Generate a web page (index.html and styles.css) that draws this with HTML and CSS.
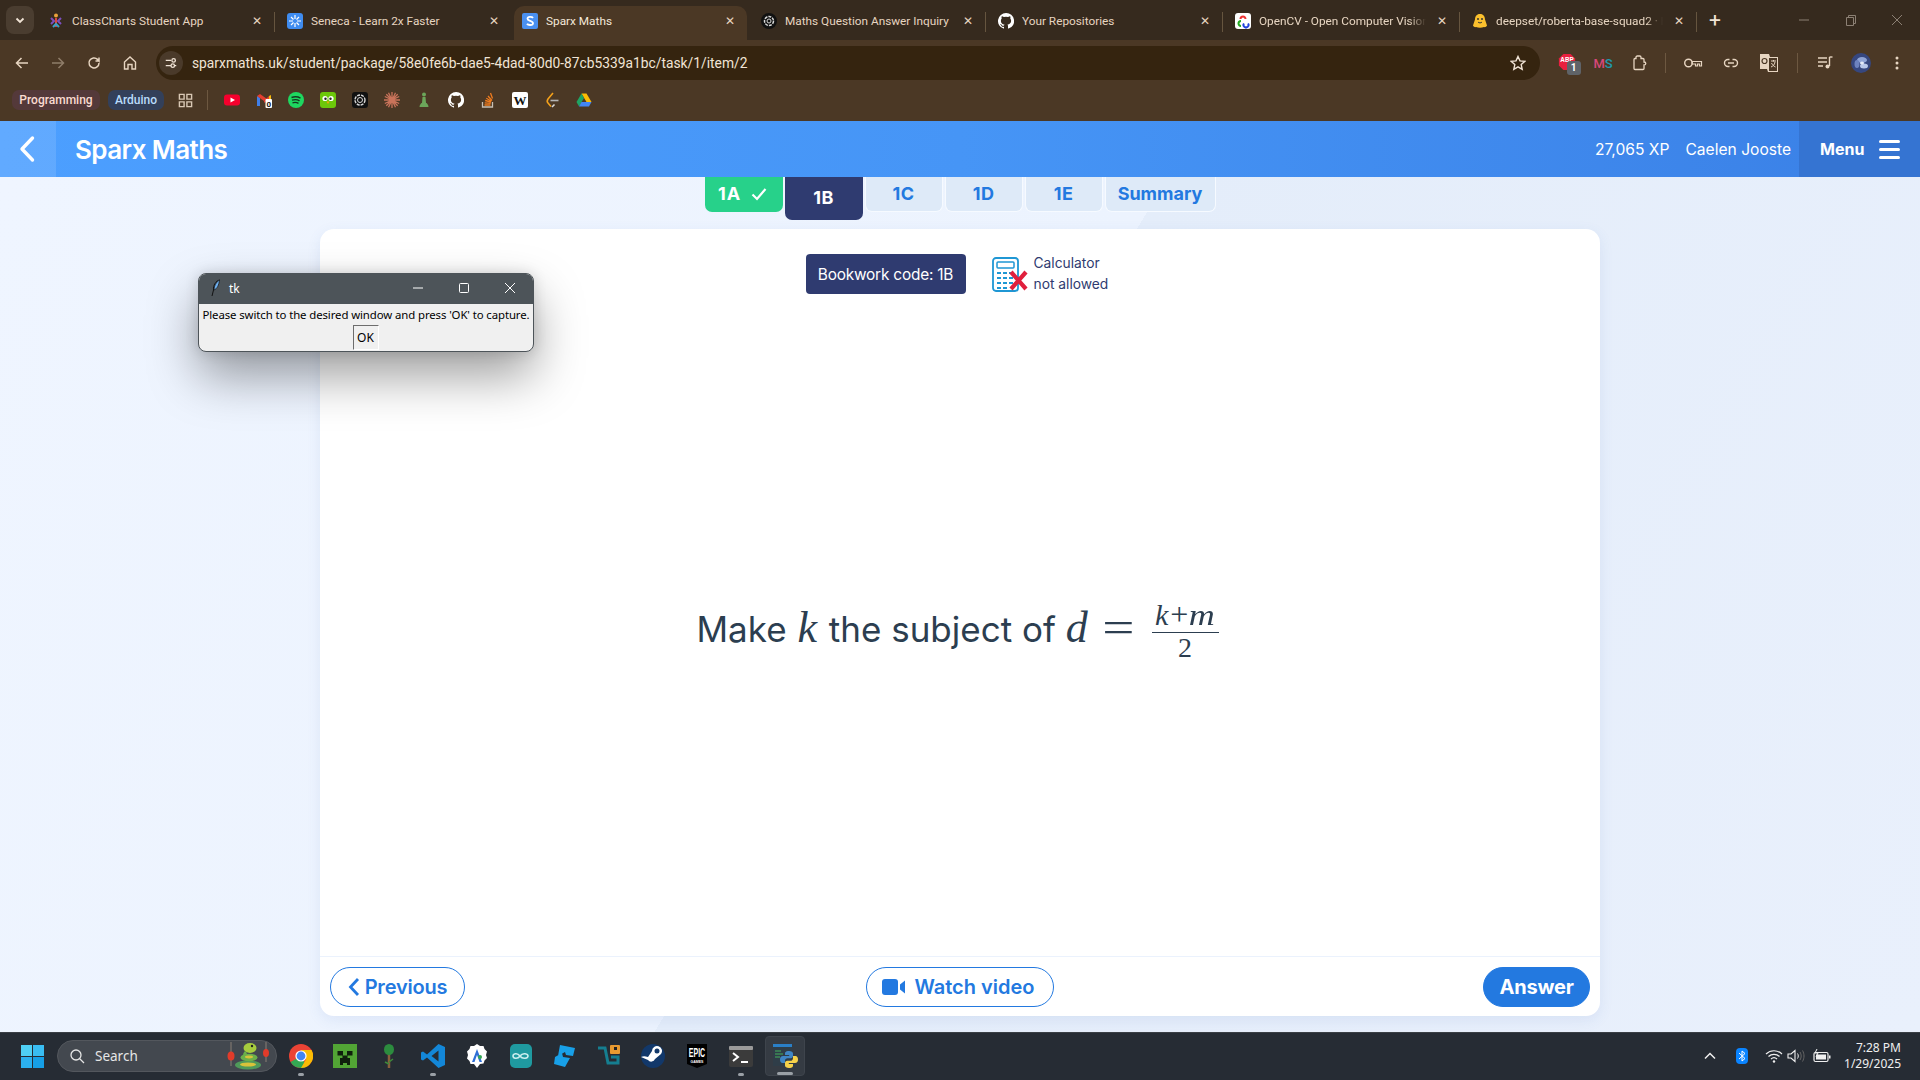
FILE: index.html
```html
<!DOCTYPE html>
<html lang="en">
<head>
<meta charset="utf-8">
<title>Sparx Maths</title>
<link rel="stylesheet" href="styles.css">
</head>
<body>
<div class="screen">

  <div class="tabstrip">
    <div class="tab-list-btn"><svg viewBox="0 0 12 12" class="i10"><path d="M2.5 4.5 6 8l3.5-3.5" fill="none" stroke="#f1e4d6" stroke-width="1.8"/></svg></div>
    <div class="tab first sep">
      <svg class="fav" viewBox="0 0 16 16"><circle cx="8" cy="2.5" r="2" fill="#e9a23b"/><path d="M3 5l3 3-3 3M13 5l-3 3 3 3" stroke="#7b4fc0" stroke-width="2" fill="none"/><path d="M8 5v9" stroke="#d8453f" stroke-width="2"/><path d="M5 14l3-3 3 3" stroke="#3aa0c8" stroke-width="2" fill="none"/></svg>
      <span class="tab-title">ClassCharts Student App</span><span class="tab-x">✕</span>
    </div>
    <div class="tab">
      <svg class="fav" viewBox="0 0 16 16"><rect width="16" height="16" rx="3" fill="#3f8cf0"/><path d="M8 2v4M8 10v4M2 8h4M10 8h4M4 4l2.5 2.5M12 4 9.5 6.5M4 12l2.5-2.5M12 12 9.5 9.5" stroke="#fff" stroke-width="1.2"/></svg>
      <span class="tab-title">Seneca - Learn 2x Faster</span><span class="tab-x">✕</span>
    </div>
    <div class="tab active">
      <svg class="fav" viewBox="0 0 16 16"><rect width="16" height="16" rx="2" fill="#4a90f0"/><path d="M11 5c-1-1.5-5.5-1.5-5.5.8C5.5 8.2 11 7.5 11 10.2c0 2.3-5 2.3-6 .5" fill="none" stroke="#fff" stroke-width="1.8"/></svg>
      <span class="tab-title">Sparx Maths</span><span class="tab-x">✕</span>
    </div>
    <div class="tab sep">
      <svg class="fav" viewBox="0 0 16 16"><circle cx="8" cy="8" r="8" fill="#111"/><circle cx="8" cy="8" r="4.5" fill="none" stroke="#d8d8d8" stroke-width="1.5" stroke-dasharray="3 1"/><circle cx="8" cy="8" r="2" fill="none" stroke="#d8d8d8"/></svg>
      <span class="tab-title">Maths Question Answer Inquiry</span><span class="tab-x">✕</span>
    </div>
    <div class="tab sep">
      <svg class="fav" viewBox="0 0 16 16"><path fill="#fff" d="M8 0a8 8 0 0 0-2.5 15.6c.4.1.5-.2.5-.4v-1.4c-2.2.5-2.7-1-2.7-1-.4-.9-.9-1.200-.9-1.200-.7-.5.1-.5.1-.5.8.1 1.200.8 1.200.8.7 1.200 1.900.9 2.300.7.1-.5.3-.9.5-1.100-1.800-.2-3.600-.9-3.600-4 0-.9.3-1.600.8-2.100-.1-.2-.4-1 .1-2.100 0 0 .7-.2 2.200.8a7.500 7.500 0 0 1 4 0c1.500-1 2.200-.8 2.200-.8.4 1.100.2 1.900.1 2.100.5.6.8 1.300.8 2.100 0 3.100-1.900 3.800-3.700 4 .3.3.6.8.6 1.500v2.200c0 .2.1.5.6.4A8 8 0 0 0 8 0z"/></svg>
      <span class="tab-title">Your Repositories</span><span class="tab-x">✕</span>
    </div>
    <div class="tab sep">
      <svg class="fav" viewBox="0 0 16 16"><rect width="16" height="16" rx="3" fill="#fff"/><path d="M5.5 6a2.5 2.5 0 1 1 5 0" fill="none" stroke="#e33" stroke-width="2"/><path d="M6 8a2.5 2.5 0 1 0 0 5" fill="none" stroke="#2a2" stroke-width="2"/><path d="M13 10.500a2.5 2.5 0 1 1-4 0" fill="none" stroke="#24d" stroke-width="2"/></svg>
      <span class="tab-title clip">OpenCV - Open Computer Vision</span><span class="tab-x">✕</span>
    </div>
    <div class="tab sep">
      <svg class="fav" viewBox="0 0 16 16"><path d="M8 1c3.5 0 5 2.5 5 5.5l2 6c0 1-2 2-3 1.5-2.5 1-5.5 1-8 0-1 .5-3-.5-3-1.500l2-6C3 3.5 4.5 1 8 1z" fill="#fbc02d"/><circle cx="6" cy="6" r="1" fill="#333"/><circle cx="10" cy="6" r="1" fill="#333"/><path d="M6 9c1 1.2 3 1.2 4 0" stroke="#333" fill="none"/></svg>
      <span class="tab-title clip">deepset/roberta-base-squad2 · Hugging Face</span><span class="tab-x">✕</span>
    </div>
    <span class="new-tab">+</span>
    <div class="window-controls">
      <svg class="i12" viewBox="0 0 12 12"><path d="M1 6h10" stroke="#8c8074"/></svg>
      <svg class="i12" viewBox="0 0 12 12"><path d="M1.5 3.5h7v8h-7zM3.5 3.5v-2h7v8h-2" fill="none" stroke="#8c8074"/></svg>
      <svg class="i12" viewBox="0 0 12 12"><path d="M1 1l10 10M11 1 1 11" stroke="#8c8074"/></svg>
    </div>
  </div>

  <div class="toolbar">
    <svg class="tb-ic nav" viewBox="0 0 16 16"><path d="M14 8H3M7.5 3 2.5 8l5 5" fill="none" stroke="#e7d5c1" stroke-width="1.5"/></svg>
    <svg class="tb-ic nav" viewBox="0 0 16 16"><path d="M2 8h11M8.5 3l5 5-5 5" fill="none" stroke="#8f7d69" stroke-width="1.5"/></svg>
    <svg class="tb-ic nav" viewBox="0 0 16 16"><path d="M13 8a5 5 0 1 1-1.5-3.6L13 6V2.5M13 6H9.5" fill="none" stroke="#e7d5c1" stroke-width="1.5"/></svg>
    <svg class="tb-ic nav" viewBox="0 0 16 16"><path d="M2.5 14V7L8 2l5.5 5v7H10V9.500H6V14z" fill="none" stroke="#e7d5c1" stroke-width="1.4"/></svg>
    <div class="omnibox">
      <div class="site-info"><svg class="i14" viewBox="0 0 16 16"><path d="M2 5h6M12 11h2M2 11h6" stroke="#f1e4d6" stroke-width="1.5"/><circle cx="11" cy="5" r="2" fill="none" stroke="#f1e4d6" stroke-width="1.5"/><circle cx="10" cy="11" r="2" fill="none" stroke="#f1e4d6" stroke-width="1.5"/></svg></div>
      <span class="url">sparxmaths.uk/student/package/58e0fe6b-dae5-4dad-80d0-87cb5339a1bc/task/1/item/2</span>
      <svg class="star" viewBox="0 0 16 16"><path d="M8 1.5l2 4.4 4.7.5-3.500 3.200 1 4.700L8 11.900l-4.200 2.400 1-4.700L1.300 6.400 6 5.900z" fill="none" stroke="#f1e4d6" stroke-width="1.4"/></svg>
    </div>
    <div class="ext-row">
      <div class="ext"><div class="abp"><svg class="abp-ic" viewBox="0 0 20 20"><path d="M6 1h8l5 5v8l-5 5H6l-5-5V6z" fill="#e8203f"/><text x="10" y="10" class="abp-text">ABP</text></svg><span class="abp-badge">1</span></div></div>
      <div class="ext"><span class="ms"><span class="ms-m">M</span><span class="ms-s">S</span></span></div>
      <div class="ext"><svg class="tb-ic" viewBox="0 0 16 16"><path d="M5 3.5V2.300c0-.8.5-1.300 1.300-1.300h2.400c.8 0 1.300.5 1.300 1.300v1.200h2c.6 0 1 .4 1 1V7c1.400 0 1.800.6 1.800 1.500S14.400 10 13 10v3.500c0 .6-.4 1-1 1H4c-.6 0-1-.4-1-1v-9c0-.6.4-1 1-1z" fill="none" stroke="#e7d5c1" stroke-width="1.3"/></svg></div>
      <span class="tb-sep first-sep"></span>
      <div class="ext tool"><svg class="tb-key" viewBox="0 0 20 16"><circle cx="5.5" cy="8" r="3.8" fill="none" stroke="#e7d5c1" stroke-width="1.4"/><path d="M9 6.500h9.500v4.500h-2V9h-2v2h-2V9H9z" fill="none" stroke="#e7d5c1" stroke-width="1.2"/></svg></div>
      <div class="ext tool"><svg class="tb-ic" viewBox="0 0 16 16"><path d="M6.5 4.5H5a3.5 3.5 0 0 0 0 7h1.500M9.500 4.500H11a3.5 3.5 0 0 1 0 7H9.500M5 8h6" fill="none" stroke="#e7d5c1" stroke-width="1.4"/></svg></div>
      <div class="ext tool"><svg class="tb-big" viewBox="0 0 20 20"><path d="M1 1h9l1 3h8v15H9l-1-3H1z" fill="#e7d5c1"/><path d="M10 5h8v13h-8z" fill="#4b3825"/><circle cx="5.5" cy="8" r="2.5" fill="none" stroke="#4b3825" stroke-width="1.2"/><path d="M12 8h5M14.500 7v1.500M16 9c-.5 3-2 4-4 5M12.500 10c1 2 2 3 4 4" stroke="#e7d5c1" fill="none"/></svg></div>
      <span class="tb-sep second-sep"></span>
      <div class="ext"><svg class="tb-ic" viewBox="0 0 16 16"><path d="M1 3h9M1 7h9M1 11h5" stroke="#e7d5c1" stroke-width="1.4"/><path d="M12.500 2v9" stroke="#e7d5c1" stroke-width="1.4"/><path d="M12.500 2h3" stroke="#e7d5c1" stroke-width="1.4"/><circle cx="10.500" cy="11.500" r="2" fill="#e7d5c1"/></svg></div>
      <div class="ext"><svg class="avatar" viewBox="0 0 20 20"><circle cx="10" cy="10" r="10" fill="#36477f"/><ellipse cx="11" cy="7" rx="5" ry="3" fill="#8fa4d6"/><ellipse cx="13" cy="13" rx="4" ry="2.500" fill="#b9c8ea"/><ellipse cx="6" cy="11" rx="2.500" ry="4" fill="#6d83bf"/><ellipse cx="11" cy="10" rx="2" ry="1.500" fill="#e4ebf8"/></svg></div>
      <div class="ext"><svg class="tb-ic" viewBox="0 0 16 16"><circle cx="8" cy="3" r="1.5" fill="#e7d5c1"/><circle cx="8" cy="8" r="1.5" fill="#e7d5c1"/><circle cx="8" cy="13" r="1.5" fill="#e7d5c1"/></svg></div>
    </div>
  </div>

  <div class="bookmarks">
    <span class="pill pill-red">Programming</span>
    <span class="pill pill-blue">Arduino</span>
    <svg class="bm grid-ic" viewBox="0 0 16 16"><path d="M1.5 1.5h5v5h-5zM9.500 1.500h5v5h-5zM1.500 9.500h5v5h-5zM9.500 9.500h5v5h-5z" fill="none" stroke="#d9c8b4" stroke-width="1.5"/></svg>
    <span class="bm-sep"></span>
    <div class="bm-icons">
      <svg class="bm" viewBox="0 0 16 16"><rect y="2.5" width="16" height="11" rx="3" fill="#f5002d"/><path d="M6.5 5.5 11 8l-4.500 2.500z" fill="#fff"/></svg>
      <svg class="bm" viewBox="0 0 16 16"><path d="M1 14V4l3 2v8z" fill="#3f7ee8"/><path d="M1 4l7 5 3-2-7-5z" fill="#e33e30"/><path d="M8 9l5-5 2 1-7 6z" fill="#e33e30"/><path d="M13 4l2-1v4l-2 1z" fill="#f6b90a"/><rect x="9.5" y="7" width="6.5" height="9" rx="1" fill="#fff"/><text x="12.700" y="14.800" class="gm-text">0</text></svg>
      <svg class="bm" viewBox="0 0 16 16"><circle cx="8" cy="8" r="8" fill="#1ed760"/><path d="M3.5 5.5c3-1 6.500-.8 9 .7M4 8.200c2.500-.8 5.500-.6 7.500.7M4.500 10.800c2-.6 4.500-.4 6 .6" stroke="#14361f" stroke-width="1.4" fill="none"/></svg>
      <svg class="bm" viewBox="0 0 16 16"><rect width="16" height="16" rx="3" fill="#6cc70a"/><circle cx="5" cy="6.5" r="2.6" fill="#fff"/><circle cx="11" cy="6.5" r="2.6" fill="#fff"/><circle cx="5.5" cy="6.8" r="1.2" fill="#222"/><circle cx="10.5" cy="6.8" r="1.2" fill="#222"/><path d="M6.5 9.5h3L8 12z" fill="#f6a60a"/></svg>
      <svg class="bm" viewBox="0 0 16 16"><rect width="16" height="16" rx="3" fill="#111"/><circle cx="8" cy="8" r="5" fill="none" stroke="#d8d8d8" stroke-width="1.4" stroke-dasharray="3 1"/><circle cx="8" cy="8" r="2.5" fill="none" stroke="#d8d8d8"/></svg>
      <svg class="bm" viewBox="0 0 16 16"><path d="M8 0v16M0 8h16M2.300 2.300l11.400 11.400M13.700 2.300 2.300 13.700M4.500 .8l7 14.400M11.500 .8l-7 14.400M.8 4.500l14.400 7M15.200 4.500.8 11.500" stroke="#c9735a" stroke-width="1.3"/></svg>
      <svg class="bm" viewBox="0 0 16 16"><circle cx="8" cy="2.5" r="2" fill="#6ca65a"/><path d="M6.5 5h3l.5 6h-4z" fill="#6ca65a"/><path d="M3.500 15c0-2 1.500-3.500 2-4h5c.5.5 2 2 2 4z" fill="#6ca65a"/></svg>
      <svg class="bm" viewBox="0 0 16 16"><path fill="#fff" d="M8 0a8 8 0 0 0-2.5 15.6c.4.1.5-.2.5-.4v-1.4c-2.2.5-2.7-1-2.7-1-.4-.9-.9-1.200-.9-1.200-.7-.5.1-.5.1-.5.8.1 1.200.8 1.200.8.7 1.200 1.900.9 2.300.7.1-.5.3-.9.5-1.100-1.800-.2-3.600-.9-3.600-4 0-.9.3-1.600.8-2.100-.1-.2-.4-1 .1-2.100 0 0 .7-.2 2.200.8a7.500 7.500 0 0 1 4 0c1.500-1 2.200-.8 2.200-.8.4 1.100.2 1.900.1 2.100.5.6.8 1.300.8 2.100 0 3.100-1.900 3.800-3.700 4 .3.3.6.8.6 1.500v2.200c0 .2.1.5.6.4A8 8 0 0 0 8 0z"/></svg>
      <svg class="bm" viewBox="0 0 16 16"><path d="M2.500 10v5h10v-5" fill="none" stroke="#c9c0b4" stroke-width="1.3"/><path d="M4.500 13h6M4.700 10.800l6 .6M5.200 8.500l5.800 1.500M6.300 6.300l5.200 3M8 4l4 4.500M10.500 1l2 5.500" stroke="#ef7b1e" stroke-width="1.3"/></svg>
      <svg class="bm" viewBox="0 0 16 16"><rect width="16" height="16" rx="2" fill="#fff"/><text x="8" y="12.500" class="wiki-text">W</text></svg>
      <svg class="bm" viewBox="0 0 16 16"><path d="M9 1 4 7c-1 1.500-1 3 0 4l3 3.500" fill="none" stroke="#f4a11b" stroke-width="1.6"/><path d="M10.500 12.500 8 15" stroke="#d8d8d8" stroke-width="1.6"/><path d="M6.500 8.500h8" stroke="#b5b5b5" stroke-width="1.6"/></svg>
      <svg class="bm" viewBox="0 0 16 16"><path d="M5.500 1.500h5L15.500 10H10.500z" fill="#fbbc04"/><path d="M5.500 1.500 .5 10 3 14.500 8 6z" fill="#1fa463"/><path d="M3 14.500h10l2.500-4.500H5.500z" fill="#4285f4"/></svg>
    </div>
  </div>

  <header class="app-header">
    <div class="back"><svg class="back-ic" viewBox="0 0 18 28"><path d="M14.500 3 4 14l10.500 11" fill="none" stroke="#fff" stroke-width="3.4" stroke-linecap="round" stroke-linejoin="round"/></svg></div>
    <h1 class="brand">Sparx Maths</h1>
    <span class="xp">27,065 XP</span>
    <span class="user">Caelen Jooste</span>
    <div class="menu"><span class="menu-label">Menu</span><span class="burger"><i></i><i></i><i></i></span></div>
  </header>

  <main class="stage">
    <nav class="task-tabs">
      <span class="ttab done">1A <svg class="check" viewBox="0 0 16 14"><path d="M1.500 7.500 6 12l8.500-10" fill="none" stroke="#fff" stroke-width="2.2"/></svg></span>
      <span class="ttab current">1B</span>
      <span class="ttab">1C</span>
      <span class="ttab">1D</span>
      <span class="ttab">1E</span>
      <span class="ttab summary">Summary</span>
    </nav>
    <section class="card">
      <div class="card-top">
        <span class="code">Bookwork code: 1B</span>
        <div class="calc">
          <svg class="calc-ic" viewBox="0 0 36 35"><rect x="1" y="1" width="25" height="33" rx="3" fill="#fff" stroke="#1f97d4" stroke-width="1.8"/><rect x="5" y="5" width="17" height="6" rx="1" fill="none" stroke="#1f97d4" stroke-width="1.5"/><path d="M5 16h16M5 21h16M5 26h16M5 31h12" stroke="#1f97d4" stroke-width="2" stroke-dasharray="4 2"/><path d="M19 15l15 17M34 15 19 32" stroke="#e01f3d" stroke-width="4.2"/></svg>
          <span class="calc-text">Calculator<br>not allowed</span>
        </div>
      </div>
      <div class="question">
        <p class="q-line">Make <i class="v vk">k</i> the subject of <i class="v">d</i><span class="eq">=</span><span class="frac"><span class="num"><i>k</i><span class="plus">+</span><i class="m">m</i></span><span class="den">2</span></span></p>
      </div>
      <footer class="card-foot">
        <span class="btn prev"><svg class="chev" viewBox="0 0 12 20"><path d="M10 2 2.500 10l7.500 8" fill="none" stroke="#2379e0" stroke-width="2.8"/></svg>Previous</span>
        <span class="btn watch"><svg class="cam" viewBox="0 0 24 18"><rect y="1" width="16" height="16" rx="3" fill="#2379e0"/><path d="M18 6.500 23 2.500v13l-5-4z" fill="#2379e0"/></svg>Watch video</span>
        <span class="btn primary">Answer</span>
      </footer>
    </section>
    <div class="tk">
      <div class="tk-title">
        <svg class="tk-feather" viewBox="0 0 10 18"><path d="M8.500 1C5 2 2 6 2.500 11l-1.500 6" fill="none" stroke="#111" stroke-width="1"/><path d="M8.500 1C5 3 3 7 3 11c3-1 5-5 5.500-10z" fill="#6fb0ef" stroke="#111" stroke-width=".7"/></svg>
        <span class="tk-name">tk</span>
        <svg class="tk-b" viewBox="0 0 12 12"><path d="M1 6h10" stroke="#fff"/></svg>
        <svg class="tk-b" viewBox="0 0 12 12"><rect x="1.5" y="1.5" width="9" height="9" rx="1" fill="none" stroke="#fff"/></svg>
        <svg class="tk-b" viewBox="0 0 12 12"><path d="M1 1l10 10M11 1 1 11" stroke="#fff"/></svg>
      </div>
      <div class="tk-body">
        <p class="tk-msg">Please switch to the desired window and press 'OK' to capture.</p>
        <span class="tk-ok">OK</span>
      </div>
    </div>
  </main>

  <div class="taskbar">
    <svg class="win" viewBox="0 0 24 24"><path d="M0 0h11.500v11.500H0z" fill="#4fd0f5"/><path d="M12.500 0H24v11.500H12.500z" fill="#39bdf2"/><path d="M0 12.500h11.500V24H0z" fill="#2bb0ee"/><path d="M12.500 12.500H24V24H12.500z" fill="#169fe6"/></svg>
    <div class="search">
      <svg class="i16" viewBox="0 0 16 16"><circle cx="7" cy="7" r="5" fill="none" stroke="#e6e6e6" stroke-width="1.3"/><path d="M10.500 10.500 15 15" stroke="#e6e6e6" stroke-width="1.3"/></svg>
      <span class="search-label">Search</span>
      <svg class="snake" viewBox="0 0 44 30"><path d="M5 1v24M40 1v20" stroke="#a98" stroke-width=".7"/><ellipse cx="5" cy="15" rx="3.500" ry="4.500" fill="#e23b2a"/><ellipse cx="40" cy="12" rx="3" ry="4" fill="#e23b2a"/><ellipse cx="22" cy="24" rx="13" ry="4.500" fill="#4f9a5a"/><ellipse cx="22" cy="23.500" rx="8" ry="2" fill="#d9c23a"/><ellipse cx="23" cy="16.500" rx="8.500" ry="3.800" fill="#6bb04a"/><ellipse cx="23" cy="16" rx="4" ry="1.400" fill="#d9c23a"/><ellipse cx="24" cy="7" rx="6.500" ry="5" fill="#a6cc3e"/><circle cx="26" cy="5" r="1.200" fill="#222"/><path d="M20 11c-1 1-2 2-1 4" stroke="#6bb04a" stroke-width="3" fill="none"/></svg>
    </div>
    <div class="apps">
      <div class="app open"><svg class="app-ic" viewBox="0 0 24 24"><circle cx="12" cy="12" r="12" fill="#ea4335"/><path d="M12 12 1.600 18A12 12 0 0 0 12 24c2 0 4-.5 5.800-1.500z" fill="#34a853"/><path d="M12 6h10.500A12 12 0 0 1 12 24l5.200-9z" fill="#fbbc04"/><circle cx="12" cy="12" r="5.600" fill="#fff"/><circle cx="12" cy="12" r="4.400" fill="#4285f4"/></svg></div>
      <div class="app"><svg class="app-ic" viewBox="0 0 24 24"><rect width="24" height="24" fill="#52a535"/><path d="M4.500 7h5.500v4.500H4.500zM14 7h5.500v4.500H14zM9.500 11.500h5V14H17v7h-3v-2h-4v2H7v-7h2.500z" fill="#10200d"/></svg></div>
      <div class="app"><svg class="app-ic" viewBox="0 0 24 24"><path d="M12 10v14" stroke="#8a5f3c" stroke-width="2.5"/><path d="M12 18l4-3M12 20l-4-2" stroke="#3d8a3a" stroke-width="1.5"/><ellipse cx="12" cy="5.500" rx="5" ry="5.500" fill="#2c8c3e"/></svg></div>
      <div class="app open"><svg class="app-ic" viewBox="0 0 24 24"><path d="M17.500 0 24 3v18l-6.500 3L6 13.500 2 16.500 0 15.500v-7L2 7.500 6 10.500zM17.500 6.500 10.500 12l7 5.500z" fill="#1387d8"/></svg></div>
      <div class="app"><svg class="app-ic" viewBox="0 0 24 24"><path d="M12 0l3 2 3.500 0 1 3 2.500 2.500-1 3.500 1 3-2.500 2.500-1 3L15 20l-3 4-3-4-3.500 0-1-3L2 14.500 3 11 2 7.500 4.500 5l1-3L9 2z" fill="#fff"/><path d="M12 5 7 18h2.500l2.500-7 2.500 7H17z" fill="#2f6fd6"/><circle cx="15" cy="13" r="2" fill="#34a853"/></svg></div>
      <div class="app"><svg class="app-ic" viewBox="0 0 24 24"><rect x="1" width="22" height="24" rx="5" fill="#1f9aa0"/><path d="M11 12c-3-4-7-2-7 0s4 4 7 0c3-4 8-2 8 0s-5 4-8 0z" fill="none" stroke="#c9eeee" stroke-width="1.6"/></svg></div>
      <div class="app"><svg class="app-ic" viewBox="0 0 24 24"><path d="M7 1l15 3-2 8-7-1-1-3-7 4zM2 13l7-4 1 4 7 1-5 9-11-3z" fill="#18a0e8"/></svg></div>
      <div class="app"><svg class="app-ic" viewBox="0 0 24 24"><path d="M1 4h7l3 15h10v-6H14" fill="none" stroke="#157e90" stroke-width="3"/><rect x="13" y="1" width="10" height="9" rx="1" fill="#e89a30"/><rect x="17" y="3" width="3" height="3" fill="#222"/></svg></div>
      <div class="app"><svg class="app-ic" viewBox="0 0 24 24"><circle cx="12" cy="12" r="12" fill="#12386a"/><path d="M0 13l7 3a4 4 0 0 0 7-1l6-5a5 5 0 1 0-9-3l-4 6C4 12 2 12 0 13z" fill="#fff"/><circle cx="16" cy="7" r="2.5" fill="#12386a"/></svg></div>
      <div class="app"><svg class="app-ic" viewBox="0 0 24 24"><path d="M2 0h20v20l-10 4-10-4z" fill="#000"/><text x="12" y="7" class="epic-text" transform="scale(1 1.900)">EPIC</text><text x="12" y="18.500" class="games-text">GAMES</text></svg></div>
      <div class="app open"><svg class="app-ic" viewBox="0 0 24 24"><rect y="2" width="24" height="21" rx="2" fill="#3b3b3b"/><rect y="2" width="24" height="4" rx="1" fill="#9a9a9a"/><path d="M4 9l5 4-5 4" fill="none" stroke="#fff" stroke-width="2"/><path d="M12 18h7" stroke="#fff" stroke-width="2"/></svg></div>
      <div class="app running"><svg class="app-ic py" viewBox="0 0 24 24"><rect width="19" height="22" fill="#2f3d48"/><rect width="19" height="3" fill="#2a7fc7"/><path d="M2 7h6M2 10h8M2 13h5" stroke="#3e8a55" stroke-width="1.4"/><path d="M16 7c-3.500 0-4 1.500-4 2.500V11h4.200v1H10c-2 0-3 1.500-3 3.500s1 3.500 2.500 3.500H12v-2.200c0-1.500 1-2.600 2.600-2.600h3.200c1.200 0 2.200-1 2.200-2.200V9.500C20 8 18.500 7 16 7z" fill="#3f86c6"/><path d="M16 24c3.500 0 4-1.500 4-2.500V20h-4.200v-1H22c2 0 3-1.500 3-3.500S24 12 22.500 12H20v2.200c0 1.500-1 2.600-2.600 2.600h-3.200c-1.200 0-2.200 1-2.200 2.200v2.500c0 1.500 1.500 2.500 4 2.500z" fill="#f7d24a"/></svg></div>
    </div>
    <div class="tray">
      <svg class="i14 t-chev" viewBox="0 0 14 14"><path d="M2 9.500 7 4.500l5 5" fill="none" stroke="#f0f0f0" stroke-width="1.5"/></svg>
      <svg class="t-bt" viewBox="0 0 12 16"><rect width="12" height="16" rx="4" fill="#0a84ff"/><path d="M3 5l6 5.500L6 13V3l3 2.500L3 11" fill="none" stroke="#fff"/></svg>
      <svg class="t-wifi" viewBox="0 0 18 14"><path d="M1 5a11.500 11.500 0 0 1 16 0M3.500 7.500a8 8 0 0 1 11 0M6 10a4.500 4.500 0 0 1 6 0" fill="none" stroke="#f0f0f0" stroke-width="1.2"/><circle cx="9" cy="12.500" r="1.200" fill="#f0f0f0"/></svg>
      <svg class="t-vol" viewBox="0 0 18 14"><path d="M1 5h3l4-3.500v11L4 9H1z" fill="none" stroke="#f0f0f0" stroke-width="1.1"/><path d="M10.500 4.500c1 1.500 1 3.500 0 5" fill="none" stroke="#f0f0f0"/><path d="M13 3c1.600 2.500 1.600 5.500 0 8M15.500 1.500c2 3.500 2 7.500 0 11" fill="none" stroke="#666"/></svg>
      <svg class="t-bat" viewBox="0 0 18 14"><rect x="1" y="3.500" width="14" height="9" rx="1.500" fill="none" stroke="#f0f0f0" stroke-width="1.2"/><rect x="3" y="5.500" width="10" height="5" fill="#f0f0f0"/><rect x="16" y="6.500" width="1.500" height="3" fill="#f0f0f0"/><path d="M4 0 2 4h3L3 8" fill="none" stroke="#f0f0f0"/></svg>
      <div class="clock"><span>7:28 PM</span><span>1/29/2025</span></div>
    </div>
  </div>

</div>
</body>
</html>
```

FILE: styles.css
```css
* { box-sizing: border-box; }
html, body { margin: 0; padding: 0; }
body { width: 1920px; height: 1080px; overflow: hidden; font-family: "Inter", "Noto Sans", sans-serif; }
p, h1 { margin: 0; }
svg { display: block; flex: none; }

.screen { width: 1920px; height: 1080px; display: flex; flex-direction: column; position: relative; overflow: hidden; }

.i10 { width: 12px; height: 12px; }
.i12 { width: 12px; height: 12px; }
.i14 { width: 14px; height: 14px; }
.i16 { width: 16px; height: 16px; }

/* Browser tab strip */
.tabstrip { height: 40px; background: #362a1e; display: flex; align-items: flex-end; flex: none; padding-left: 6px; font-family: "Roboto", sans-serif; }
.tab-list-btn { width: 28px; height: 28px; margin: 0 4px 6px 0; border-radius: 8px; background: #4a3d30; display: flex; align-items: center; justify-content: center; }
.tab { width: 237px; height: 34px; display: flex; align-items: center; padding: 0 12px 5px 12px; color: #e7d5c1; font-size: 11.8px; position: relative; }
.tab.first { padding-left: 10px; }
.tab.sep::after { content: ""; position: absolute; right: 0; top: 6px; width: 1px; height: 20px; background: #66553f; }
.tab.active { background: #4b3825; border-radius: 10px 10px 0 0; margin: 0 2px; width: 233px; padding-left: 8px; padding-right: 11px; color: #f5e8da; }
.fav { width: 16px; height: 16px; margin-right: 8px; }
.tab-title { flex: 1; min-width: 0; white-space: nowrap; overflow: hidden; }
.tab-title.clip { margin-right: 10px; -webkit-mask-image: linear-gradient(90deg, #000 90%, transparent); mask-image: linear-gradient(90deg, #000 90%, transparent); }
.tab-x { width: 12px; font-size: 12px; line-height: 12px; text-align: center; color: #e7d5c1; flex: none; }
.new-tab { width: 36px; text-align: center; color: #f1e4d6; font-size: 21px; line-height: 28px; height: 34px; }
.window-controls { margin-left: auto; height: 40px; width: 140px; display: flex; align-items: center; justify-content: space-between; padding: 0 17px 0 18px; }

/* Browser toolbar */
.toolbar { height: 40px; background: #4b3825; flex: none; display: flex; align-items: center; padding: 6px 4px 0 14px; }
.tb-ic { width: 16px; height: 16px; }
.tb-ic.nav { margin-right: 20px; }
.tb-key { width: 20px; height: 16px; }
.tb-big { width: 20px; height: 20px; }
.omnibox { width: 1384px; height: 34px; margin: 0 0 0 -2px; background: #35240f; border-radius: 17px; display: flex; align-items: center; padding: 0 14px 0 3px; }
.site-info { width: 24px; height: 24px; border-radius: 50%; background: #4a3a2a; display: flex; align-items: center; justify-content: center; margin-right: 9px; }
.url { font-family: "Roboto", sans-serif; font-size: 13.8px; color: #f1e4d6; flex: 1; white-space: nowrap; }
.star { width: 16px; height: 16px; }
.ext-row { flex: 1; display: flex; align-items: center; padding-left: 9px; }
.ext { width: 36px; display: flex; align-items: center; justify-content: center; }
.ext.tool { width: 38px; }
.abp { position: relative; width: 18px; height: 18px; margin: -2px 0 0 -1px; }
.abp-ic { width: 18px; height: 18px; }
.abp-text { font: 700 7px "Liberation Sans", sans-serif; fill: #fff; text-anchor: middle; }
.abp-badge { position: absolute; left: 9px; top: 8px; width: 14px; height: 14px; border-radius: 3px; background: #5f6368; color: #fff; font: 700 10px/14px "Roboto", sans-serif; text-align: center; }
.ms { font: 500 13px "Roboto", sans-serif; }
.ms-m { color: #d8487a; }
.ms-s { color: #1f9bb0; }
.tb-sep { height: 20px; flex: none; background: linear-gradient(#6d5841, #6d5841) center / 1px 100% no-repeat; }
.first-sep { width: 17px; }
.second-sep { width: 19px; }
.avatar { width: 20px; height: 20px; }

/* Bookmarks */
.bookmarks { height: 41px; background: #4b3825; flex: none; display: flex; align-items: center; padding: 0 0 1px 12px; }
.pill { height: 20px; border-radius: 7px; font: 500 12px/20px "Roboto", sans-serif; text-align: center; }
.pill-red { width: 88px; background: #54393a; color: #fadbd0; margin-right: 8px; }
.pill-blue { width: 56px; background: #33405a; color: #b9dcfb; margin-right: 14px; }
.bm { width: 16px; height: 16px; }
.grid-ic { width: 15px; height: 15px; }
.bm-sep { width: 1px; height: 20px; background: #6d5841; margin: 0 16px 0 14px; }
.bm-icons { display: flex; gap: 16px; }
.gm-text { font: 700 8px "Roboto", sans-serif; fill: #111; text-anchor: middle; }
.wiki-text { font: 700 13px "Liberation Serif", serif; fill: #111; text-anchor: middle; }

/* App header */
.app-header { height: 56px; flex: none; display: flex; align-items: center; background: linear-gradient(90deg, #4c9fff 0, #4695f6 50%, #3a80e6 100%); color: #fff; }
.back { width: 56px; height: 56px; background: rgba(255,255,255,.12); display: flex; align-items: center; justify-content: center; padding-right: 3px; }
.back-ic { width: 18px; height: 28px; }
.brand { margin-left: 19px; font-size: 26px; font-weight: 600; letter-spacing: -.6px; flex: 1; }
.xp { font-size: 15.6px; margin-right: 16px; }
.user { font-size: 15.6px; margin-right: 8px; }
.menu { width: 121px; height: 56px; background: #3574d2; display: flex; align-items: center; padding-left: 21px; }
.menu-label { font-size: 16px; font-weight: 700; width: 59px; }
.burger { width: 21px; display: flex; flex-direction: column; gap: 5px; }
.burger i { display: block; height: 3px; border-radius: 2px; background: #fff; }

/* Stage */
.stage { flex: 1; position: relative; display: flex; flex-direction: column; align-items: center; min-height: 0; background: linear-gradient(121deg, #eff5ff 0, #ecf3fe 48%, #e4edfa 48%, #e9f0fc 100%); }
.task-tabs { height: 52px; display: flex; align-items: flex-start; gap: 2px; }
.ttab { width: 78px; height: 35px; padding-bottom: 2px; background: #deeaf8; border: 1px solid #f6faff; border-top: 0; border-radius: 0 0 7px 7px; color: #2379e0; font-size: 18px; font-weight: 700; letter-spacing: .4px; display: flex; align-items: center; justify-content: center; }
.ttab.done { background: #27d18a; border: 0; color: #fff; gap: 10px; letter-spacing: 1px; padding-right: 2px; }
.check { width: 16px; height: 14px; }
.ttab.current { background: #2f3b70; border: 0; height: 43px; color: #fff; padding-bottom: 3px; }
.ttab.summary { width: 111px; letter-spacing: 0; }
.card { width: 1280px; height: 787px; background: #fff; border-radius: 14px; display: flex; flex-direction: column; box-shadow: 0 4px 14px rgba(70,110,190,.1); }
.card-top { display: flex; align-items: center; justify-content: center; gap: 26px; padding: 24px 0 0 3px; }
.code { width: 160px; height: 40px; border-radius: 4px; background: #2f3b70; color: #fff; font-size: 15.4px; letter-spacing: -.2px; display: flex; align-items: center; justify-content: center; }
.calc { display: flex; align-items: center; gap: 6px; }
.calc-ic { width: 36px; height: 35px; }
.calc-text { font-size: 13.8px; line-height: 21px; color: #2f3b70; width: 84px; }
.question { flex: 1; display: flex; align-items: center; justify-content: center; padding-top: 7px; }
.q-line { font-size: 35px; color: #2c3e50; white-space: nowrap; margin-right: 5px; }
.v { font: italic 44px/1 "Liberation Serif", serif; }
.vk { margin: 0 2px 0 1px; }
.eq { display: inline-block; transform: scaleX(1.3); font: 400 44px/1 "Liberation Serif", serif; margin: 0 21px 0 18px; }
.frac { display: inline-flex; width: 67px; flex-direction: column; align-items: stretch; text-align: center; vertical-align: 17px; font: 30px/1 "Liberation Serif", serif; color: #2c3e50; }
.num { border-bottom: 1px solid #2c3e50; padding-bottom: 2px; display: block; white-space: nowrap; }
.plus { font-style: normal; font-size: 32px; margin: 0 1px 0 2px; }
.m { display: inline-block; transform: scaleX(1.2); margin: 0 2px; }
.den { padding-top: 2px; font-size: 28px; line-height: .9; display: block; }
.card-foot { height: 60px; border-top: 1px solid #ebf2fd; display: grid; grid-template-columns: 1fr auto 1fr; align-items: center; padding: 0 10px; flex: none; }
.btn { height: 40px; border: 1px solid #2379e0; border-radius: 20px; color: #2379e0; font-size: 20px; font-weight: 600; letter-spacing: -.2px; display: flex; align-items: center; justify-content: center; }
.prev { width: 135px; gap: 5px; }
.watch { width: 188px; gap: 8px; letter-spacing: 0; padding-right: 3px; }
.btn.primary { width: 107px; justify-self: end; background: #2379e0; color: #fff; font-weight: 700; }
.chev { width: 12px; height: 20px; }
.cam { width: 24px; height: 18px; }

/* tk dialog window */
.tk { position: absolute; left: 198px; top: 96px; width: 336px; height: 79px; border-radius: 8px; background: #f0f0f0; border: 1px solid #4d5459; box-shadow: 0 24px 50px rgba(0,0,0,.38), 0 0 14px rgba(0,0,0,.14); font-family: "Noto Sans", sans-serif; }
.tk-title { height: 30px; background: #4d5459; display: flex; align-items: center; color: #fff; padding: 0 17px 2px 12px; border-radius: 7px 7px 0 0; }
.tk-feather { width: 10px; height: 18px; }
.tk-name { font-size: 12px; margin-left: 8px; flex: 1; }
.tk-b { width: 12px; height: 12px; margin-left: 34px; }
.tk-body { display: flex; flex-direction: column; align-items: center; }
.tk-msg { font-size: 11.4px; line-height: 21px; color: #000; white-space: nowrap; letter-spacing: -.1px; }
.tk-ok { width: 26px; height: 25px; font-size: 12px; line-height: 24px; text-align: center; border: 1px solid #fff; border-left-color: #6d6d6d; border-top-color: #6d6d6d; color: #000; margin: 0 0 0 -1px; }

/* Taskbar */
.taskbar { height: 48px; flex: none; background: #262c34; border-top: 1px solid #3a3f45; display: flex; align-items: center; padding: 0 0 1px 21px; color: #fff; font-family: "Noto Sans", sans-serif; }
.win { width: 23px; height: 23px; }
.search { width: 220px; height: 32px; margin-left: 13px; border-radius: 16px; background: #43484f; display: flex; align-items: center; padding: 0 6px 0 11px; gap: 10px; border: 1px solid #53575d; }
.search-label { font-size: 13.5px; color: #e6e6e6; flex: 1; }
.snake { width: 44px; height: 30px; }
.apps { display: flex; margin-left: 4px; gap: 4px; }
.app { width: 40px; height: 40px; display: flex; align-items: center; justify-content: center; position: relative; border-radius: 4px; }
.app-ic { width: 24px; height: 24px; }
.app-ic.py { overflow: visible; }
.app.open::after, .app.running::after { content: ""; position: absolute; left: 50%; bottom: 0; width: 6px; height: 3px; margin-left: -3px; border-radius: 2px; background: #9aa0a6; }
.app.running { background: #353b43; border: 1px solid #3e444c; }
.app.running::after { width: 16px; margin-left: -8px; }
.epic-text { font: 700 7px "Liberation Sans", sans-serif; fill: #fff; text-anchor: middle; }
.games-text { font: 700 3.5px "Liberation Sans", sans-serif; fill: #fff; text-anchor: middle; }
.tray { margin-left: auto; display: flex; align-items: center; padding-right: 19px; }
.t-chev { margin-right: 19px; }
.t-bt { width: 12px; height: 16px; margin-right: 17px; }
.t-wifi { width: 18px; height: 14px; margin-right: 4px; }
.t-vol { width: 18px; height: 14px; margin-right: 8px; }
.t-bat { width: 18px; height: 14px; margin-right: 13px; }
.clock { display: flex; flex-direction: column; align-items: flex-end; font-size: 12px; line-height: 16px; color: #f0f0f0; }
```
